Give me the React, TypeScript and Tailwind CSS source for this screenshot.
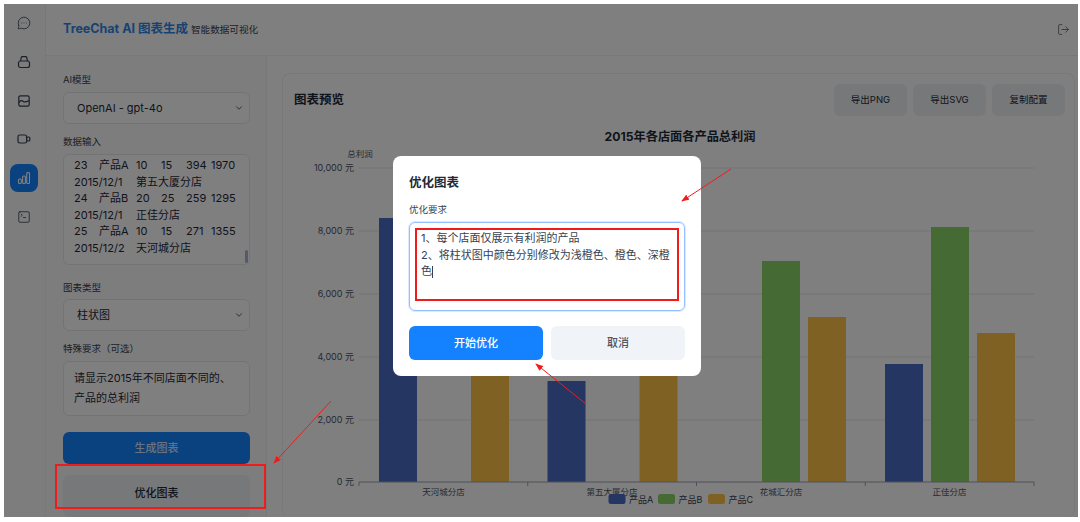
import { ChevronDown, LogOut, MessageCircleMore, SquareTerminal } from 'lucide-react'

const dataRows = [
  ['23', '产品A', '10', '15', '394', '1970'],
  ['2015/12/1', '第五大厦分店'],
  ['24', '产品B', '20', '25', '259', '1295'],
  ['2015/12/1', '正佳分店'],
  ['25', '产品A', '10', '15', '271', '1355'],
  ['2015/12/2', '天河城分店'],
]

const yTicks = [
  { label: '10,000 元', y: 168 },
  { label: '8,000 元', y: 231 },
  { label: '6,000 元', y: 294 },
  { label: '4,000 元', y: 357 },
  { label: '2,000 元', y: 420 },
  { label: '0 元', y: 482 },
]

const A = '#4d6cc4'
const B = '#8ad466'
const C = '#fcc247'

const bars = [
  { x: 379, top: 218, fill: A },
  { x: 471, top: 340, fill: C },
  { x: 547.5, top: 381, fill: A },
  { x: 639.5, top: 340, fill: C },
  { x: 762, top: 261, fill: B },
  { x: 808, top: 317, fill: C },
  { x: 885, top: 364, fill: A },
  { x: 931, top: 227, fill: B },
  { x: 977, top: 333, fill: C },
]

function Chart() {
  return (
    <svg viewBox="283 130 792 387" className="w-[792px] h-[387px] block" fontFamily="Inter, 'Noto Sans CJK SC', sans-serif">
      <text x="680" y="141" textAnchor="middle" fontSize="12.2" fontWeight="700" fill="#1f2937">2015年各店面各产品总利润</text>
      <text x="360" y="157" textAnchor="middle" fontSize="8.5" fill="#4b5563">总利润</text>
      {yTicks.map(t => (
        <g key={t.y}>
          <text x="354" y={t.y + 3} textAnchor="end" fontSize="9" fill="#4b5563">{t.label}</text>
          {t.y !== 482 && <line x1="359" x2="1034" y1={t.y} y2={t.y} stroke="#e5e7eb" />}
        </g>
      ))}
      {bars.map(b => (
        <rect key={b.x} x={b.x} y={b.top} width="38" height={482 - b.top} fill={b.fill} />
      ))}
      <line x1="359" x2="1034" y1="482" y2="482" stroke="#9ca3af" strokeWidth="1.2" />
      {[359, 527.75, 696.5, 865.25, 1034].map(x => (
        <line key={x} x1={x} x2={x} y1="482" y2="486" stroke="#9ca3af" />
      ))}
      {[['天河城分店', 443.5], ['第五大厦分店', 612], ['花城汇分店', 781], ['正佳分店', 949.5]].map(([t, x]) => (
        <text key={t} x={x} y="495" textAnchor="middle" fontSize="8.5" fill="#4b5563">{t}</text>
      ))}
      {[['产品A', 608.5, A], ['产品B', 658, B], ['产品C', 708, C]].map(([t, x, fill]) => (
        <g key={t as string}>
          <rect x={x as number} y="494" width="17" height="10" rx="2.5" fill={fill as string} />
          <text x={(x as number) + 20.5} y="502.5" fontSize="9" fill="#374151">{t}</text>
        </g>
      ))}
    </svg>
  )
}

function SideIcon({ children, active }: { children: React.ReactNode; active?: boolean }) {
  return (
    <div className={active ? 'w-7 h-7 rounded-lg bg-[#1482ff] text-white flex items-center justify-center' : 'w-7 h-7 text-[#374151] flex items-center justify-center'}>
      {children}
    </div>
  )
}

function Select({ value }: { value: string }) {
  return (
    <div className="h-8 rounded-md border border-[#e5e7eb] bg-white pl-[13px] pr-[5px] flex items-center justify-between text-[11px] text-[#1f2937]">
      <span>{value}</span>
      <ChevronDown size={10} strokeWidth={2} className="text-[#374151]" />
    </div>
  )
}

export default function App() {
  return (
    <div className="w-[1080px] h-[522px] bg-white pl-1 pt-1 pr-[2px] pb-[5px] overflow-hidden font-['Inter','Noto_Sans_CJK_SC',sans-serif]">
      <div className="relative w-full h-full overflow-hidden flex bg-white">
        <aside className="w-[42px] shrink-0 bg-[#fbfbfc] border-r border-[#f0f1f3] pr-[1px] flex flex-col items-center pt-[5px] gap-[10.8px]">
          <SideIcon><MessageCircleMore size={14} strokeWidth={1.4} /></SideIcon>
          <SideIcon>
            <svg width="14" height="14" viewBox="0 0 14 14" fill="none" stroke="currentColor" strokeWidth="1.2">
              <rect x="1.5" y="6" width="11" height="6.5" rx="2" />
              <path d="M3.5 6 L4.2 2.6 Q4.4 1.6 5.4 1.6 H8.6 Q9.6 1.6 9.8 2.6 L10.5 6" />
            </svg>
          </SideIcon>
          <SideIcon>
            <svg width="14" height="14" viewBox="0 0 14 14" fill="none" stroke="currentColor" strokeWidth="1.2">
              <rect x="1.8" y="1.8" width="10.4" height="10.4" rx="1.6" />
              <path d="M2 8.6 Q4 5.4 6 7.2 T12 6.4" />
            </svg>
          </SideIcon>
          <SideIcon>
            <svg width="14" height="14" viewBox="0 0 14 14" fill="none" stroke="currentColor" strokeWidth="1.2">
              <rect x="1" y="3" width="8.6" height="8" rx="1.8" />
              <rect x="9.6" y="5" width="3.2" height="4" rx="1" />
            </svg>
          </SideIcon>
          <SideIcon active>
            <svg width="14" height="14" viewBox="0 0 14 14" fill="none" stroke="currentColor" strokeWidth="1.1">
              <rect x="1.5" y="8" width="2.8" height="4.5" rx="1" />
              <rect x="5.6" y="5" width="2.8" height="7.5" rx="1" />
              <rect x="9.7" y="1.6" width="2.8" height="10.9" rx="1" />
            </svg>
          </SideIcon>
          <SideIcon><SquareTerminal size={14} strokeWidth={1.4} /></SideIcon>
        </aside>

        <div className="flex-1 min-w-0 flex flex-col">
          <header className="h-[52px] shrink-0 bg-white border-b border-[#f0f1f3] pl-[17px] pr-[8px] flex items-center justify-between">
            <div className="flex items-baseline gap-[3px]">
              <span className="text-[12.5px] font-bold text-[#2f86e6]">TreeChat AI 图表生成</span>
              <span className="text-[9.6px] text-[#374151]">智能数据可视化</span>
            </div>
            <LogOut size={13} strokeWidth={1.4} className="text-[#4b5563]" />
          </header>

          <div className="flex-1 min-h-0 flex">
            <div className="w-[221px] shrink-0 bg-[#fbfbfc] border-r border-[#f0f1f3] pl-[17px] pr-[16px] pt-[17px]">
              <div className="text-[9.5px] leading-[14px] text-[#374151] mb-[5px]">AI模型</div>
              <Select value="OpenAI - gpt-4o" />
              <div className="text-[9.5px] leading-[14px] text-[#374151] mt-[11px] mb-[5px]">数据输入</div>
              <div className="relative h-[111px] rounded-md border border-[#e5e7eb] bg-white pl-[10px] pt-[2px] text-[11px] leading-[16.5px] text-[#1f2937]">
                {dataRows.map((row, i) => (
                  <div key={i} className="grid grid-cols-[25px_37px_25px_25px_25px_auto]">
                    {row.length === 2 ? (
                      <>
                        <span className="col-span-2">{row[0]}</span>
                        <span className="col-span-4">{row[1]}</span>
                      </>
                    ) : (
                      row.map((c, j) => <span key={j}>{c}</span>)
                    )}
                  </div>
                ))}
                <div className="absolute right-[1px] bottom-[1px] w-[3px] h-[13px] rounded-sm bg-[#a8b5cc]" />
              </div>
              <div className="text-[9.5px] leading-[14px] text-[#374151] mt-[16px] mb-[4px]">图表类型</div>
              <Select value="柱状图" />
              <div className="text-[9.5px] leading-[14px] text-[#374151] mt-[11px] mb-[5px]">特殊要求（可选）</div>
              <div className="h-[55px] rounded-md border border-[#e5e7eb] bg-white pl-[10px] pr-2 pt-[6px] text-[11px] leading-[20px] text-[#1f2937]">
                请显示2015年不同店面不同的、产品的总利润
              </div>
              <button className="mt-4 w-full h-[32px] rounded-md bg-[#1482ff] text-white/80 text-[11px] font-medium">生成图表</button>
              <button className="mt-[11px] w-full h-[42px] rounded-md bg-[#eef0f3] text-[#1f2937] text-[11px] font-medium pb-[12px] pt-[6px]">优化图表</button>
            </div>

            <main className="flex-1 min-w-0 pl-[15px] pr-[3px] pt-[17px]">
              <div className="h-full rounded-lg bg-white border border-[#f0f1f3] border-b-0">
                <div className="h-[56px] pl-[11px] pr-[9px] pt-[10px] flex items-start justify-between">
                  <h2 className="text-[12.5px] font-semibold text-[#1f2937] leading-[32px]">图表预览</h2>
                  <div className="flex gap-[6px]">
                    {['导出PNG', '导出SVG', '复制配置'].map(t => (
                      <button key={t} className="w-[73px] h-8 rounded-md bg-[#eef0f3] text-[9.5px] text-[#1f2937]">{t}</button>
                    ))}
                  </div>
                </div>
                <Chart />
              </div>
            </main>
          </div>
        </div>

        {/* 遮罩和弹窗 */}
        <div className="absolute inset-0 bg-black/50 backdrop-blur-[0.6px] pl-[389px] pt-[152px]">
          <div className="w-[308px] h-[220px] rounded-lg bg-white px-4 pt-[19px] text-[#1f2937]">
            <h3 className="text-[12.5px] leading-4 font-semibold text-[#1f2937]">优化图表</h3>
            <div className="mt-[12px] text-[9.5px] leading-[14px] text-[#374151]">优化要求</div>
            <div className="mt-[5px] h-[89px] rounded-md border border-[#93c0ff] shadow-[0_0_0_1px_#dbeafe] px-[11px] pt-[7px] text-[11px] leading-[16.5px] text-[#374151]">
              <div>1、每个店面仅展示有利润的产品</div>
              <div>2、将柱状图中颜色分别修改为浅橙色、橙色、深橙色<span className="inline-block w-px h-[12px] bg-[#374151] align-middle" /></div>
            </div>
            <div className="mt-[15px] flex gap-2">
              <button className="flex-1 h-[34px] rounded-md bg-[#1482ff] text-white text-[11px] font-medium">开始优化</button>
              <button className="flex-1 h-[34px] rounded-md bg-[#f0f4f8] text-[#4b5563] text-[11px] font-medium">取消</button>
            </div>
          </div>
        </div>
      </div>

      {/* 截图上的红色标注 */}
      <div className="absolute left-[415px] top-[228px] w-[264px] h-[73px] border-2 border-[#f01c1c]" />
      <div className="absolute left-[55px] top-[464px] w-[211px] h-[45px] border-2 border-[#f01c1c]" />
      <svg className="absolute left-0 top-0 w-[1080px] h-[522px] pointer-events-none" viewBox="0 0 1080 522">
        <defs>
          <marker id="head" markerWidth="8" markerHeight="6" refX="7" refY="3" orient="auto">
            <path d="M0 0 L8 3 L0 6 Z" fill="#f01c1c" />
          </marker>
        </defs>
        <line x1="731" y1="169" x2="682" y2="201" stroke="#f01c1c" strokeWidth="1" markerEnd="url(#head)" />
        <line x1="586" y1="404" x2="536" y2="364" stroke="#f01c1c" strokeWidth="1" markerEnd="url(#head)" />
        <line x1="331" y1="401" x2="274" y2="463" stroke="#f01c1c" strokeWidth="1" markerEnd="url(#head)" />
      </svg>
    </div>
  )
}
